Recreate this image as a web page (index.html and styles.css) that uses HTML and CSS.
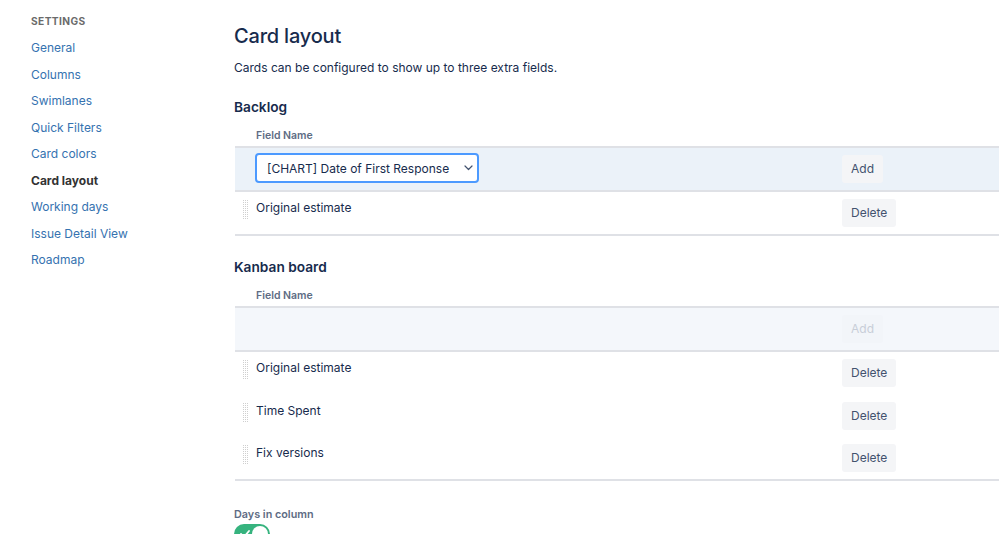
FILE: index.html
```html
<!DOCTYPE html>
<html>
<head>
<meta charset="utf-8">
<link rel="stylesheet" href="styles.css">
</head>
<body>
<div class="page">
  <nav class="sidebar">
    <div class="side-title">SETTINGS</div>
    <a class="side-link">General</a>
    <a class="side-link">Columns</a>
    <a class="side-link">Swimlanes</a>
    <a class="side-link">Quick Filters</a>
    <a class="side-link">Card colors</a>
    <a class="side-link active">Card layout</a>
    <a class="side-link">Working days</a>
    <a class="side-link">Issue Detail View</a>
    <a class="side-link">Roadmap</a>
  </nav>
  <main class="main">
    <h1 class="title">Card layout</h1>
    <p class="desc">Cards can be configured to show up to three extra fields.</p>

    <h2 class="section">Backlog</h2>
    <div class="table">
      <div class="thead"><span class="th">Field Name</span></div>
      <div class="row add-row active">
        <span></span>
        <div class="select">
          <span>[CHART] Date of First Response</span>
          <svg class="chev" width="9" height="6" viewBox="0 0 9 6"><path d="M1 1l3.5 3.5L8 1" fill="none" stroke="#42526e" stroke-width="1.2" stroke-linecap="round" stroke-linejoin="round"/></svg>
        </div>
        <div class="act"><button class="btn">Add</button></div>
      </div>
      <div class="row field-row">
        <span class="handle"></span>
        <span class="fname">Original estimate</span>
        <div class="act"><button class="btn">Delete</button></div>
      </div>
    </div>

    <h2 class="section kanban">Kanban board</h2>
    <div class="table">
      <div class="thead"><span class="th">Field Name</span></div>
      <div class="row add-row disabled">
        <span></span>
        <span></span>
        <div class="act"><button class="btn btn-disabled">Add</button></div>
      </div>
      <div class="row field-row plain">
        <span class="handle"></span>
        <span class="fname">Original estimate</span>
        <div class="act"><button class="btn">Delete</button></div>
      </div>
      <div class="row field-row plain">
        <span class="handle"></span>
        <span class="fname">Time Spent</span>
        <div class="act"><button class="btn">Delete</button></div>
      </div>
      <div class="row field-row">
        <span class="handle"></span>
        <span class="fname">Fix versions</span>
        <div class="act"><button class="btn">Delete</button></div>
      </div>
    </div>

    <div class="days-label">Days in column</div>
    <div class="toggle">
      <svg class="check" width="10" height="8" viewBox="0 0 10 8"><path d="M1 4l3 3 5-6" fill="none" stroke="#fff" stroke-width="1.8" stroke-linecap="round" stroke-linejoin="round"/></svg>
      <span class="knob"></span>
    </div>
  </main>
</div>
</body>
</html>
```
FILE: styles.css
```css
* { box-sizing: border-box; }
html, body { margin: 0; padding: 0; }
body {
  font-family: Inter, "Liberation Sans", sans-serif;
  color: #172b4d;
  background: #fff;
  width: 999px;
  height: 534px;
  overflow: hidden;
}
.page {
  display: flex;
}
.sidebar {
  width: 234px;
  flex: none;
  padding: 13px 0 0 31px;
  display: flex;
  flex-direction: column;
  align-items: flex-start;
}
.side-title {
  font-size: 10.2px;
  font-weight: 700;
  color: #6b6b6b;
  letter-spacing: 0.4px;
  line-height: 16px;
  margin-bottom: 6px;
}
.side-link {
  font-size: 12px;
  line-height: 26.5px;
  color: #3572b0;
  text-decoration: none;
}
.side-link.active {
  color: #333;
  font-weight: 700;
}
.main {
  flex: 1;
  padding-top: 22px;
  min-width: 0;
}
.title {
  margin: 0;
  font-size: 20px;
  font-weight: 500;
  line-height: 28px;
  letter-spacing: -0.2px;
}
.desc {
  margin: 8px 0 0;
  font-size: 12px;
  line-height: 20px;
}
.section {
  margin: 19px 0 0;
  font-size: 13.7px;
  font-weight: 600;
  line-height: 20px;
}
.section.kanban { margin-top: 21px; }
.table {
  margin-left: 1px;
  width: 900px;
}
.thead {
  padding: 11px 0 2px 21px;
  border-bottom: 2px solid #dfe1e6;
}
.th {
  display: block;
  font-size: 10.5px;
  font-weight: 600;
  line-height: 16px;
  color: #5e6c84;
}
.row {
  display: grid;
  grid-template-columns: 21px 586px auto;
  align-items: start;
  padding: 7px 0;
}
.add-row {
  border-bottom: 2px solid #dfe1e6;
  padding: 5px 0 7px;
}
.add-row.active { background: #ebf2f9; }
.add-row.disabled { background: #f4f7fb; padding: 7px 0; }
.field-row { border-bottom: 2px solid #dfe1e6; }
.field-row.plain { border-bottom: none; padding-bottom: 7.5px; }
.select {
  margin-left: -1px;
  width: 224px;
  height: 30px;
  border: 2px solid #4c9aff;
  border-radius: 4px;
  background: #fff;
  display: flex;
  align-items: center;
  justify-content: space-between;
  padding: 0 4px 0 10px;
  font-size: 12px;
  color: #172b4d;
  white-space: nowrap;
}
.chev { display: block; }
.act { display: flex; }
.add-row.active .act { padding-top: 2px; }
.btn {
  font-family: inherit;
  font-size: 12px;
  color: #42526e;
  background: #f4f5f7;
  border: none;
  border-radius: 3px;
  height: 28px;
  padding: 0 9px;
  line-height: 28px;
}
.btn-disabled {
  color: #c8ced8;
  background: #f2f5f9;
}
.handle {
  margin: 0 0 0 7px;
  width: 7px;
  height: 21px;
  background-color: #cfcfcf;
  background-image: linear-gradient(90deg, #fff 1px, transparent 1px), linear-gradient(#fff 1px, transparent 1px);
  background-size: 2px 2px;
}
.fname {
  font-size: 12px;
  line-height: 18px;
  color: #172b4d;
}
.days-label {
  margin-top: 26px;
  font-size: 10.8px;
  font-weight: 600;
  line-height: 16px;
  color: #5e6c84;
}
.toggle {
  margin-top: 1px;
  width: 36px;
  height: 20px;
  border-radius: 10px;
  background: #36b37e;
  display: flex;
  align-items: center;
  justify-content: space-between;
  padding: 0 2px 0 6px;
}
.check { display: block; }
.knob {
  width: 16px;
  height: 16px;
  border-radius: 50%;
  background: #fff;
}
```
